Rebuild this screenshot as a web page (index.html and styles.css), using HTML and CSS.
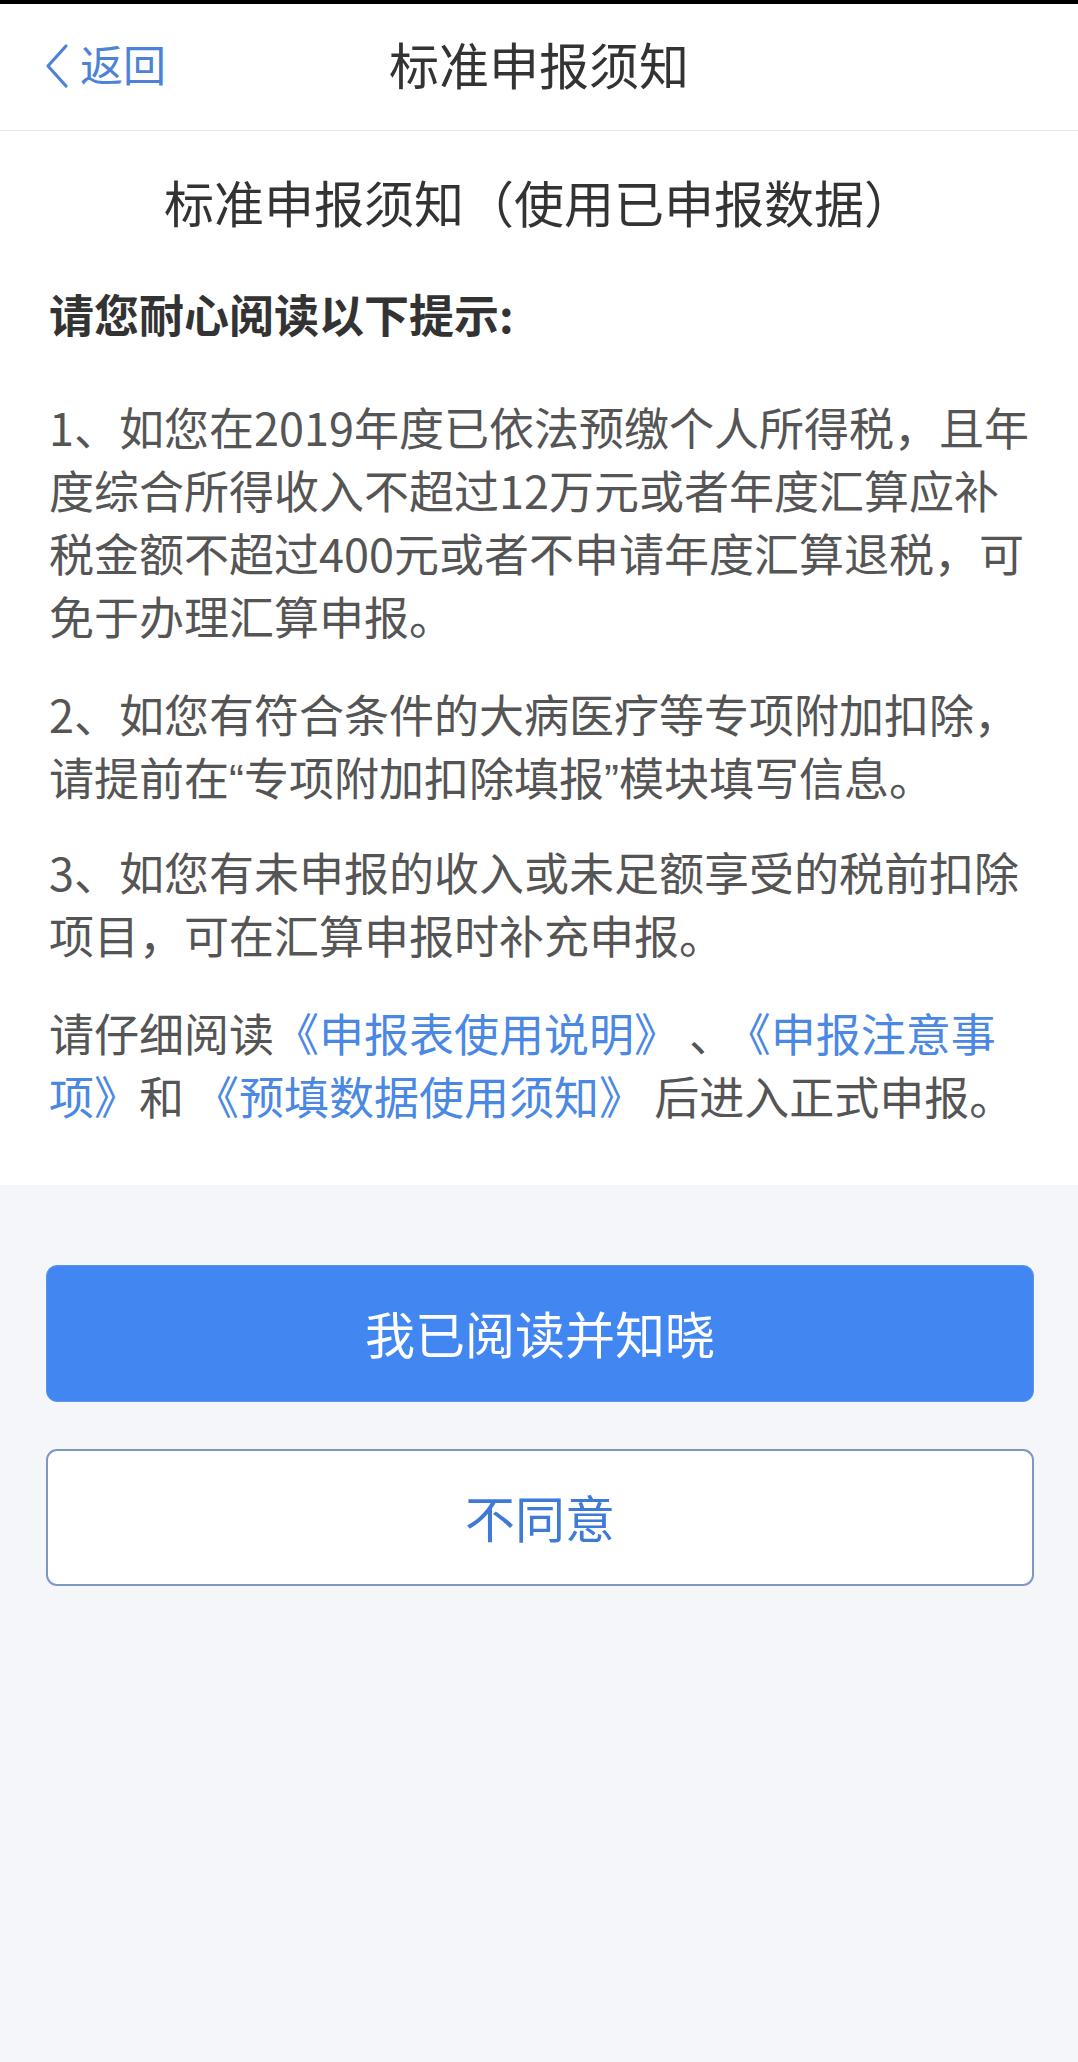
FILE: index.html
```html
<!DOCTYPE html>
<html lang="zh-CN">
<head>
<meta charset="utf-8">
<title>标准申报须知</title>
<link rel="stylesheet" href="styles.css">
</head>
<body>
<div class="status"></div>
<header class="nav">
  <a class="back">
    <svg class="back-icon" width="26" height="46" viewBox="0 0 26 46"><polyline points="22,3 4,23 22,43" fill="none" stroke="#4d83d6" stroke-width="3.2" stroke-linecap="round" stroke-linejoin="round"/></svg>
    <span class="back-text">返回</span>
  </a>
  <h1 class="nav-title">标准申报须知</h1>
</header>
<main class="notice">
  <h2 class="notice-title">标准申报须知（使用已申报数据）</h2>
  <p class="notice-lead">请您耐心阅读以下提示:</p>
  <p class="notice-item">1、如您在2019年度已依法预缴个人所得税，且年度综合所得收入不超过12万元或者年度汇算应补税金额不超过400元或者不申请年度汇算退税，可免于办理汇算申报。</p>
  <p class="notice-item">2、如您有符合条件的大病医疗等专项附加扣除，请提前在<span class="quote">“</span>专项附加扣除填报<span class="quote">”</span>模块填写信息。</p>
  <p class="notice-item item-3">3、如您有未申报的收入或未足额享受的税前扣除项目，可在汇算申报时补充申报。</p>
  <p class="notice-item">请仔细阅读<a class="link">《申报表使用说明》</a> 、<a class="link link-gap">《申报注意事项》</a>和 <a class="link">《预填数据使用须知》</a> 后进入正式申报。</p>
</main>
<section class="actions">
  <button class="btn btn-primary">我已阅读并知晓</button>
  <button class="btn btn-outline">不同意</button>
</section>
</body>
</html>
```
FILE: styles.css
```css
html, body {
  margin: 0;
  padding: 0;
}
body {
  width: 1078px;
  min-height: 2062px;
  background: #f4f6fa;
  font-family: "Noto Sans CJK SC", "Noto Sans", sans-serif;
  color: #555;
}
.status {
  height: 4px;
  background: #000;
}
.nav {
  height: 127px;
  box-sizing: border-box;
  padding-bottom: 8px;
  background: #fff;
  border-bottom: 1px solid #e4e4e4;
  display: flex;
  align-items: center;
  justify-content: center;
  position: relative;
}
.back {
  position: absolute;
  left: 44px;
  top: 0;
  bottom: 8px;
  display: flex;
  align-items: center;
  gap: 10px;
  color: #4d83d6;
}
.back-icon {
  display: block;
  margin-top: 6px;
}
.back-text {
  font-size: 43px;
  line-height: 1;
}
.nav-title {
  margin: 0;
  font-size: 50px;
  font-weight: normal;
  color: #333;
  line-height: 1;
}
.notice {
  background: #fff;
  padding: 35px 43px 58px 49px;
}
.notice-title {
  margin: 0 -43px 0 -49px;
  font-size: 50px;
  line-height: 70px;
  font-weight: normal;
  color: #333;
  text-align: center;
}
.notice-lead {
  margin: 46px 0 0;
  font-size: 45px;
  line-height: 63px;
  font-weight: bold;
  color: #333;
}
.notice-item {
  margin: 35px 0 0;
  font-size: 45px;
  line-height: 63px;
  color: #555;
}
.notice-lead + .notice-item {
  margin-top: 50px;
}
.notice-item.item-3 {
  margin-top: 28px;
}
.quote {
  font-family: "Liberation Sans", sans-serif;
}
.link {
  color: #4a88e4;
}
.link-gap {
  margin-left: 14px;
}
.actions {
  display: flex;
  flex-direction: column;
  gap: 47px;
  padding: 80px 44px 0 46px;
}
.btn {
  height: 137px;
  border-radius: 11px;
  font-family: inherit;
  font-size: 50px;
  padding: 0 0 4px;
}
.btn-primary {
  background: #4286f2;
  color: #fff;
  border: 1px solid #5a95f0;
}
.btn-outline {
  background: #fff;
  color: #3f7ad6;
  border: 2px solid #7f97c3;
}
```
